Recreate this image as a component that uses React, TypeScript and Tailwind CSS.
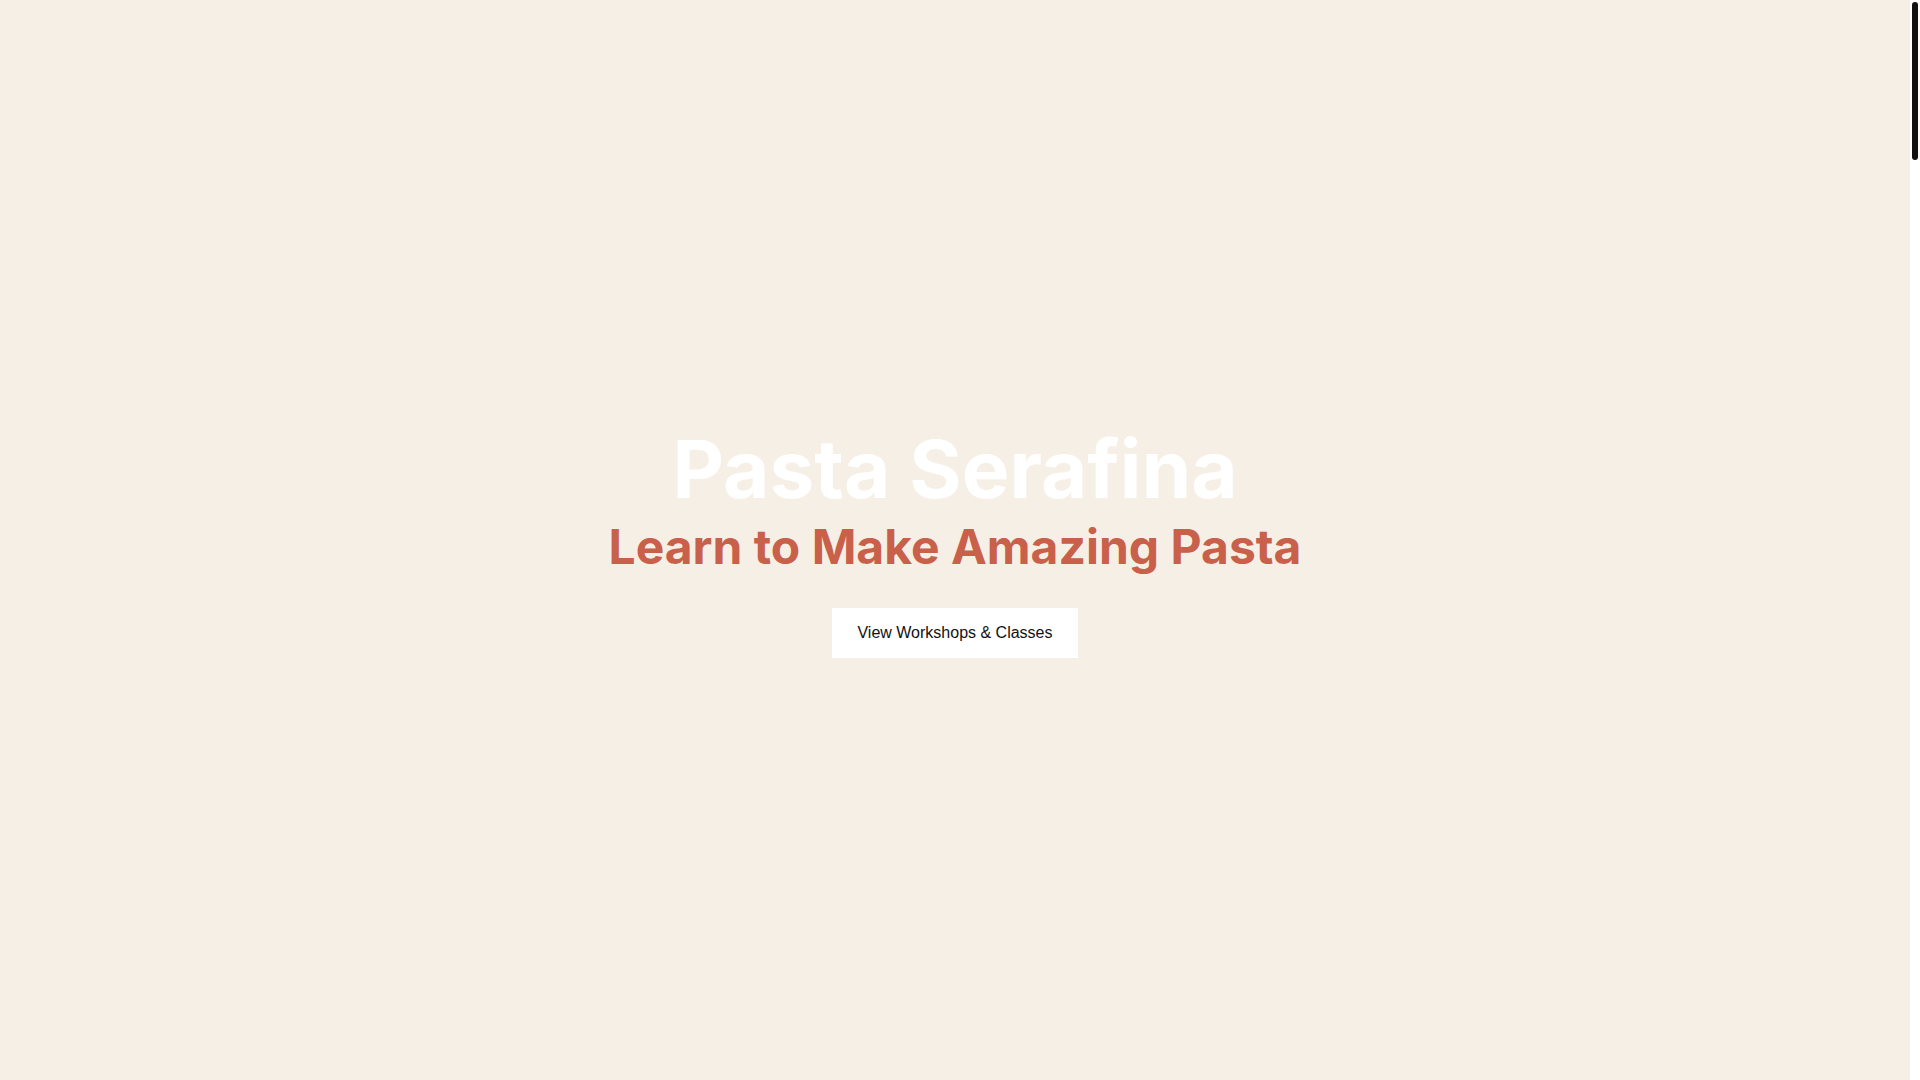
// Landing page hero: cream background, centred title, tagline and a single call to action.
// The right-hand strip draws the page's slim dark scrollbar.
export default function App() {
  return (
    <div className="flex h-screen overflow-hidden bg-[#f6efe6]">
      <main className="flex min-w-0 flex-1 flex-col items-center justify-center pt-[7px] font-['Inter',sans-serif]">
        <h1 className="mb-[14px] text-[80px] font-bold leading-[80px] text-white">Pasta Serafina</h1>
        <h2 className="text-[48px] font-bold leading-[48px] text-[#c8604a]">Learn to Make Amazing Pasta</h2>
        <a
          href="#workshops"
          className="mt-[37px] bg-white px-[25px] py-4 font-['Liberation_Sans',Arial,sans-serif] text-[16px] leading-[18px] text-[#111111]"
        >
          View Workshops &amp; Classes
        </a>
      </main>
      <aside className="flex w-[10px] shrink-0 justify-center bg-white pt-[2px]">
        <div className="h-[158px] w-[6px] rounded-full bg-[#111111]" />
      </aside>
    </div>
  );
}
